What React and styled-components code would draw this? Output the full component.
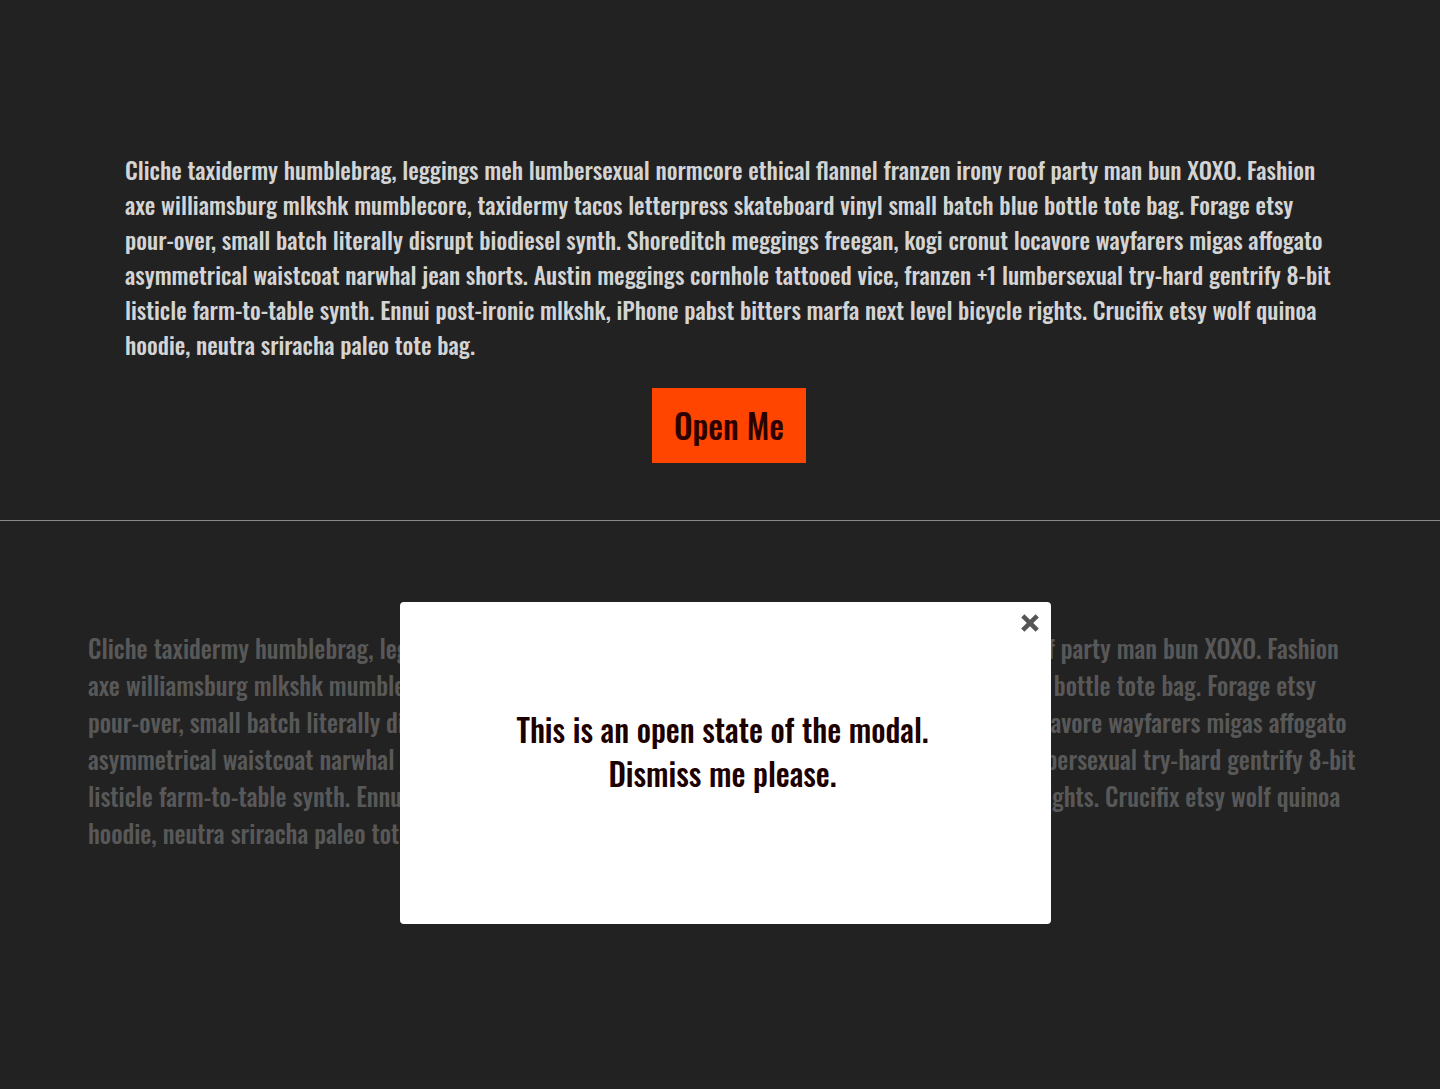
import React from "react";
import styled, { createGlobalStyle } from "styled-components";

const GlobalStyle = createGlobalStyle`
  html, body { margin: 0; padding: 0; background: #222; }
  body { font-family: Oswald, "Roboto Condensed", "Liberation Sans Narrow", sans-serif; min-height: 1089px; }
`;

const lines = [
  "Cliche taxidermy humblebrag, leggings meh lumbersexual normcore ethical flannel franzen irony roof party man bun XOXO. Fashion",
  "axe williamsburg mlkshk mumblecore, taxidermy tacos letterpress skateboard vinyl small batch blue bottle tote bag. Forage etsy",
  "pour-over, small batch literally disrupt biodiesel synth. Shoreditch meggings freegan, kogi cronut locavore wayfarers migas affogato",
  "asymmetrical waistcoat narwhal jean shorts. Austin meggings cornhole tattooed vice, franzen +1 lumbersexual try-hard gentrify 8-bit",
  "listicle farm-to-table synth. Ennui post-ironic mlkshk, iPhone pabst bitters marfa next level bicycle rights. Crucifix etsy wolf quinoa",
  "hoodie, neutra sriracha paleo tote bag.",
];

const Page = styled.main`
  background: #222;
  min-height: 1089px;
  display: flex;
  flex-direction: column;
`;

const DemoSection = styled.section`
  padding: 152px 0 57px 125px;
  display: flex;
  flex-direction: column;
  align-items: flex-start;
  border-bottom: 1px solid #8a8a8a;
`;

const OpenSection = styled.section`
  position: relative;
  flex: 1;
  padding: 108px 0 0 88px;
`;

const Copy = styled.p`
  margin: 0;
  font-family: Oswald, "Roboto Condensed", sans-serif;
  font-weight: 500;
  font-size: ${p => (p.$large ? "24.8px" : "23.6px")};
  line-height: ${p => (p.$large ? "37px" : "35px")};
  color: ${p => (p.$dim ? "#585858" : "#d4d4d4")};
`;

const Line = styled.span`
  display: block;
  white-space: nowrap;
`;

const ButtonRow = styled.div`
  width: 1200px;
  display: flex;
  justify-content: center;
  padding-left: 8px;
  box-sizing: border-box;
  margin-top: 26px;
`;

const OpenButton = styled.button`
  appearance: none;
  border: none;
  border-radius: 0;
  background: #ff4500;
  color: #2a0000;
  font-family: Oswald, "Roboto Condensed", sans-serif;
  font-weight: 500;
  font-size: 33px;
  line-height: 75px;
  height: 75px;
  width: 154px;
  padding: 0;
  cursor: pointer;
`;

const Modal = styled.div`
  position: absolute;
  top: 81px;
  left: 400px;
  width: 651px;
  height: 322px;
  box-sizing: border-box;
  background: #fff;
  border-radius: 4px;
  padding: 105px 36px 0 30px;
  text-align: center;
`;

const ModalText = styled.p`
  margin: 0;
  font-family: Oswald, "Roboto Condensed", sans-serif;
  font-weight: 500;
  font-size: 31.3px;
  line-height: 44px;
  color: #1c0000;
`;

const CloseButton = styled.button`
  position: absolute;
  top: 11px;
  right: 11px;
  width: 20px;
  height: 20px;
  padding: 0;
  border: none;
  background: transparent;
  cursor: pointer;
  display: flex;
  align-items: center;
  justify-content: center;
`;

function CloseIcon() {
  return (
    <svg width="20" height="20" viewBox="0 0 20 20" aria-hidden="true">
      <path
        d="M4.4 1.2 L10 6.8 L15.6 1.2 L18.8 4.4 L13.2 10 L18.8 15.6 L15.6 18.8 L10 13.2 L4.4 18.8 L1.2 15.6 L6.8 10 L1.2 4.4 Z"
        fill="#555"
      />
    </svg>
  );
}

function Paragraph({ large, dim }) {
  return (
    <Copy $large={large} $dim={dim}>
      {lines.map((l, i) => (
        <Line key={i}>{l}</Line>
      ))}
    </Copy>
  );
}

export default function App() {
  return (
    <>
      <GlobalStyle />
      <Page>
        <DemoSection>
          <Paragraph />
          <ButtonRow>
            <OpenButton type="button">Open Me</OpenButton>
          </ButtonRow>
        </DemoSection>
        <OpenSection>
          <Paragraph large dim />
          <Modal role="dialog" aria-modal="true">
            <CloseButton type="button" aria-label="Close">
              <CloseIcon />
            </CloseButton>
            <ModalText>
              This is an open state of the modal.
              <br />
              Dismiss me please.
            </ModalText>
          </Modal>
        </OpenSection>
      </Page>
    </>
  );
}
